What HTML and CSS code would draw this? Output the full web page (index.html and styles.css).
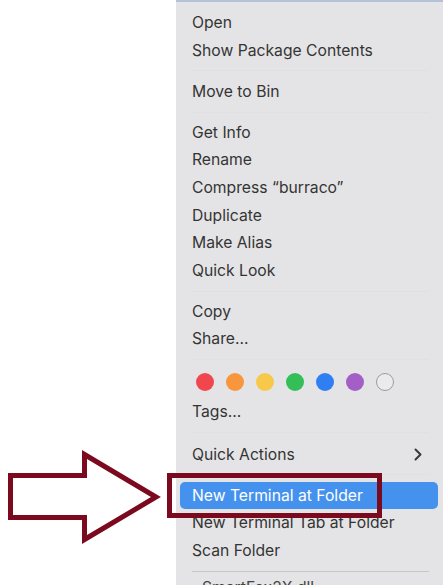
FILE: index.html
```html
<!DOCTYPE html>
<html lang="en">
<head>
  <meta charset="UTF-8" />
  <title>Context menu</title>
  <link rel="stylesheet" href="styles.css">
</head>
<body>
  <div class="page">
    <div class="menu">
      <div class="item">Open</div>
      <div class="item">Show Package Contents</div>
      <div class="sep"></div>
      <div class="item">Move to Bin</div>
      <div class="sep"></div>
      <div class="item">Get Info</div>
      <div class="item">Rename</div>
      <div class="item">Compress “burraco”</div>
      <div class="item">Duplicate</div>
      <div class="item">Make Alias</div>
      <div class="item">Quick Look</div>
      <div class="sep"></div>
      <div class="item">Copy</div>
      <div class="item">Share...</div>
      <div class="sep"></div>
      <div class="tags">
        <span class="dot red"></span>
        <span class="dot orange"></span>
        <span class="dot yellow"></span>
        <span class="dot green"></span>
        <span class="dot blue"></span>
        <span class="dot purple"></span>
        <span class="dot none"></span>
      </div>
      <div class="item">Tags...</div>
      <div class="sep wide"></div>
      <div class="item submenu">
        Quick Actions
        <svg class="chevron" width="8" height="13" viewBox="0 0 8 13"><path d="M1.5 1.5 L6.5 6.5 L1.5 11.5" fill="none" stroke="#3a3a3a" stroke-width="2" stroke-linecap="round" stroke-linejoin="round"/></svg>
      </div>
      <div class="sep"></div>
      <div class="item selected">New Terminal at Folder</div>
      <div class="item">New Terminal Tab at Folder</div>
      <div class="item">Scan Folder</div>
      <div class="sep dark"></div>
      <div class="file">SmartFox2X.dll</div>
    </div>

    <div class="callout"></div>
    <svg class="arrow" width="170" height="105" viewBox="0 445 170 105">
      <polygon points="10.5,475.5 84.5,475.5 84.5,454.5 156,497 84.5,539.5 84.5,517.5 10.5,517.5" fill="#fff" stroke="#7b0a1f" stroke-width="5" stroke-linejoin="miter"/>
    </svg>
  </div>
</body>
</html>
```

FILE: styles.css
```css
html, body { margin: 0; background: #ffffff; }
body { font-family: Inter, "Noto Sans", sans-serif; color: #343434; }
.page { position: relative; width: 443px; height: 585px; overflow: hidden; }

.menu {
  margin-left: 176px; height: 585px; box-sizing: border-box;
  background: #e4e4e6; border-top: 2px solid #b3c2d8;
  padding-top: 7px;
}
.item {
  height: 27.6px; line-height: 27.6px; margin: 0 5px 0 4px; padding: 0 12px;
  font-size: 15.7px; white-space: nowrap; border-radius: 5px;
}
.item.submenu { display: flex; justify-content: space-between; align-items: center; }
.item.submenu .chevron { margin-right: 4px; }
.item.selected { background: #4492ee; color: #ffffff; }

.sep { height: 13.5px; display: flex; align-items: center; margin: 0 14px 0 16px; }
.sep::after { content: ""; flex: 1; height: 1px; background: #e0e0e2; }
.sep.wide { height: 15.5px; }
.sep.dark { height: 13px; }
.sep.dark::after { background: #c6c6c8; }

.tags { height: 31px; display: flex; align-items: center; gap: 12px; padding-left: 20px; }
.dot { width: 18px; height: 18px; border-radius: 50%; box-sizing: border-box; }
.dot.red { background: #f0474f; }
.dot.orange { background: #f7963c; }
.dot.yellow { background: #f8c84a; }
.dot.green { background: #33be58; }
.dot.blue { background: #2f7ff3; }
.dot.purple { background: #a35fc6; }
.dot.none { border: 1.5px solid #9c9c9e; background: #ebebec; }

.file { padding-left: 26px; font-size: 15.7px; line-height: 20px; color: #444; }

.callout {
  position: absolute; left: 167px; top: 473px; width: 215px; height: 45px;
  box-sizing: border-box; border: 5px solid #7b0a1f;
}
.arrow { position: absolute; left: 0; top: 445px; }
```
